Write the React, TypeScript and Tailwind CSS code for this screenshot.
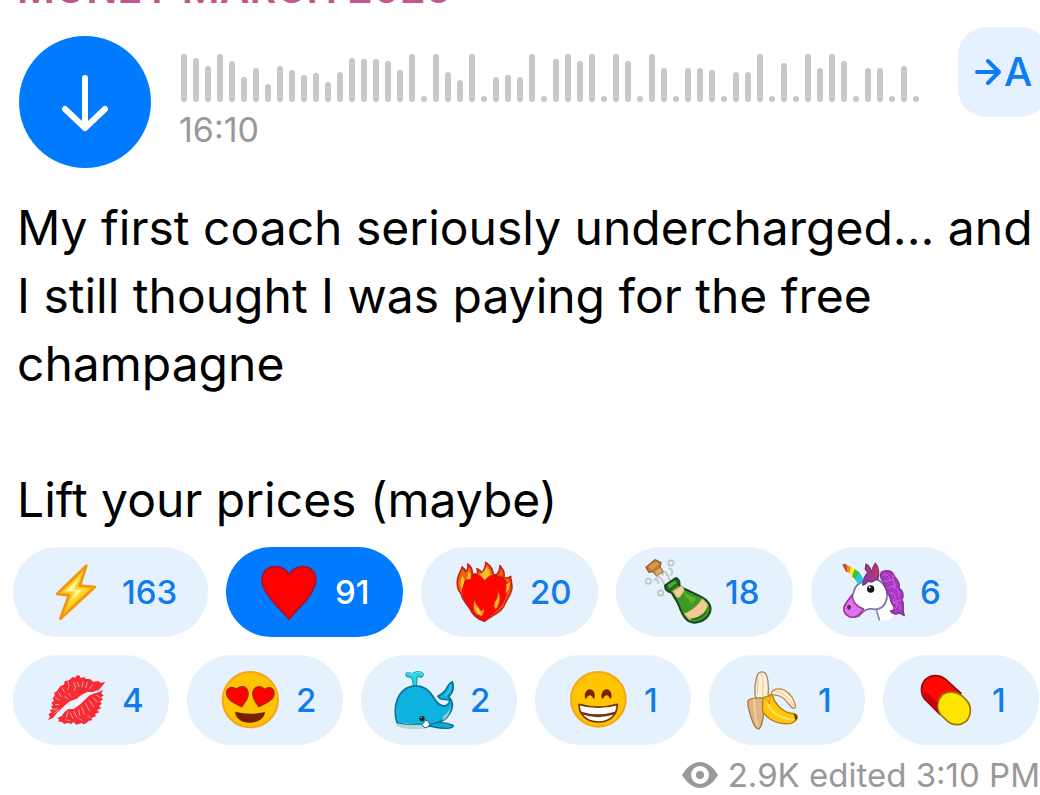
import React from "react";

type IconProps = { viewBox: string; children: React.ReactNode };

function Emoji({ viewBox, children }: IconProps) {
  return (
    <svg viewBox={viewBox} className="size-[68px] shrink-0" aria-hidden="true" strokeLinejoin="round" strokeLinecap="round">
      {children}
    </svg>
  );
}

const Bolt = () => (
  <Emoji viewBox="126 54 204 204">
    <path d="M259 77 L171 162 L207 166 L181 236 L285 141 L240 137 Z" fill="#ffc61a" stroke="#f0960f" strokeWidth="8" />
    <path d="M247 98 L190 155 L219 158 L200 207 L265 146 L228 143 Z" fill="#ffd932" />
    <path d="M238 112 L198 153 L226 155 L211 185 L246 151 L221 148 Z" fill="#fff59a" />
  </Emoji>
);

const Heart = () => (
  <Emoji viewBox="765 54 204 204">
    <path
      d="M867 238 C850 216 828 198 808 171 C791 149 784 134 786 115 C789 91 806 79 826 80 C847 81 861 91 867 105 C874 91 887 81 907 80 C929 79 945 93 947 114 C949 134 939 153 924 173 C905 198 884 216 867 238 Z"
      fill="#ff0000"
      stroke="#a5122c"
      strokeWidth="5"
    />
  </Emoji>
);

const BurningHeart = () => (
  <Emoji viewBox="99 54 204 204">
    <path
      d="M202 244 C181 237 165 221 159 206 C146 190 135 176 132 160 C119 149 119 123 124 110 C127 96 134 91 135 81 C140 85 144 90 146 95 C152 91 154 80 152 72 C161 78 167 92 166 107 C169 102 175 100 179 104 C184 105 182 93 180 86 C188 90 193 95 194 98 C203 91 207 76 206 67 C219 76 228 86 228 102 C237 110 249 98 249 77 C258 89 264 97 260 112 C267 117 276 113 281 109 C280 123 290 139 282 155 C278 168 269 180 264 190 C258 215 229 222 202 244 Z"
      fill="#f5600f"
      stroke="#c5201b"
      strokeWidth="5"
    />
    <path
      d="M202 242 C183 233 167 221 161 205 C146 186 136 172 137 145 C142 114 162 101 182 106 C193 109 199 116 202 125 C214 108 230 102 247 109 C268 117 273 137 269 158 C263 180 252 198 240 210 C228 220 214 228 202 242 Z"
      fill="#ff0500"
      stroke="#d9150f"
      strokeWidth="4"
    />
    <path d="M187 103 C196 100 207 89 208 78 C215 87 221 94 220 104 L203 119 Z" fill="#ffba25" />
    <path d="M146 118 C153 111 155 101 151 93 C163 99 164 108 160 118 Z M134 151 C128 132 130 117 137 107 L143 121 Z" fill="#ffbd26" />
    <path d="M176 169 C168 188 185 198 190 209 C195 216 199 207 198 199 C207 216 196 232 189 228 C171 223 160 205 176 169 Z" fill="#ff9c18" stroke="#d91c14" strokeWidth="3" />
    <path d="M178 202 C177 213 184 220 191 224 C185 213 188 207 178 202 Z" fill="#ffe343" />
    <path d="M241 151 C254 170 251 187 237 209 C231 205 228 195 234 184 C241 175 244 163 241 151 Z M266 132 C275 131 277 124 278 119 C284 137 278 153 267 161 C263 154 270 144 266 132 Z" fill="#ffb527" stroke="#df2b16" strokeWidth="3" />
  </Emoji>
);

const Champagne = () => (
  <Emoji viewBox="684 54 204 204">
    <g fill="#eef2f5" stroke="#c2c2c2" strokeWidth="5">
      <circle cx="694" cy="124" r="8" />
      <circle cx="731" cy="159" r="8" />
      <circle cx="762" cy="69" r="8" />
      <path d="M711 119 C719 115 725 123 723 129 M718 112 C728 105 737 122 743 133 M737 105 C739 91 750 95 749 105 C756 103 754 119 759 122 M756 85 C768 88 768 99 762 105" fill="none" />
    </g>
    <path d="M687 82 L714 59 L732 68 L729 82 L737 94 L719 106 L708 95 L696 97 Z" fill="#bf7b38" stroke="#98612c" strokeWidth="4" />
    <path d="M693 79 L717 65 L727 71 L705 91 Z" fill="#d69a50" />
    <path d="M711 94 L730 81 L739 96 L719 107 Z" fill="#dba963" stroke="#a97031" strokeWidth="3" />
    <path
      d="M744 137 L776 114 C784 115 789 125 787 137 C814 157 840 158 867 180 C883 195 885 211 873 228 C857 247 830 253 814 243 C793 229 792 206 781 187 L764 158 C752 155 744 148 744 137 Z"
      fill="#3f9824"
      stroke="#12491b"
      strokeWidth="6"
    />
    <path d="M748 136 L776 117 L784 133 L758 153 Z" fill="#28771f" stroke="#194b1b" strokeWidth="3" />
    <path d="M751 136 L775 121 L778 130 L757 145 Z" fill="#59a628" />
    <path d="M768 154 L793 137 C804 144 803 157 793 163 C792 171 783 176 779 171 Z" fill="#f0cf98" stroke="#cba868" strokeWidth="2" />
    <path d="M802 221 C820 215 842 198 856 176 L872 193 C870 218 845 239 818 239 Z" fill="#f0cb91" stroke="#cfaf6c" strokeWidth="2" />
    <path d="M798 157 L836 174 C835 183 829 190 823 191 Z" fill="#5fb32c" />
    <path d="M872 201 C872 221 853 239 826 241 L819 236 C844 235 865 220 872 201 Z" fill="#23731d" />
  </Emoji>
);

const Unicorn = () => (
  <Emoji viewBox="120 54 204 204">
    <path d="M229 203 L239 241 C264 245 289 236 282 209 L280 142 L250 124 L224 164 Z" fill="#ffffff" />
    <path d="M176 132 C188 124 204 118 218 116 C247 117 267 149 260 175 C257 197 239 212 218 207 C199 203 186 218 176 229 C157 236 132 224 132 204 C134 190 151 178 159 163 C163 151 164 139 176 132 Z" fill="#ffffff" stroke="#7b68a5" strokeWidth="5" />
    <path d="M156 165 C158 185 171 201 191 207 C182 218 178 228 164 231 C146 235 130 221 132 204 C134 189 148 178 156 165 Z" fill="#df72ed" stroke="#9c378e" strokeWidth="5" />
    <ellipse cx="147" cy="202" rx="6" ry="8" fill="#741b72" />
    <path d="M130 74 L138 74 L148 91 L140 95 L132 81 Z" fill="#d84b25" stroke="#a94228" strokeWidth="3" />
    <path d="M140 76 L155 81 L151 101 L141 93 Z" fill="#ff841a" />
    <path d="M151 80 L166 87 L161 110 L149 100 Z" fill="#ffed23" />
    <path d="M164 88 L179 97 L168 121 L156 109 Z" fill="#41bf38" />
    <path d="M178 97 L187 111 C192 121 186 132 174 133 L167 120 Z" fill="#24c7e0" />
    <path d="M188 135 C190 119 194 105 205 98 L196 88 L198 72 C207 77 214 90 217 101 C216 91 219 80 226 70 C236 80 239 102 233 119 C220 118 218 130 210 125 C201 119 204 132 188 135 Z" fill="#9a38a0" stroke="#713679" strokeWidth="4" />
    <path d="M219 82 L227 72 C237 86 236 107 228 114 L219 111 Z M199 76 L211 93 L203 99 Z" fill="#c53166" stroke="#984070" strokeWidth="3" />
    <path d="M244 96 C269 86 279 95 285 112 C297 122 300 136 297 144 C309 151 313 167 306 180 C316 194 304 207 313 227 L297 218 C289 226 276 221 271 213 C283 213 285 203 279 196 C267 180 275 169 260 157 C264 143 249 143 251 126 C240 116 240 105 244 96 Z" fill="#a837c4" stroke="#843191" strokeWidth="4" />
    <path d="M249 105 C263 101 269 109 270 120 C283 120 286 132 281 141 C294 145 299 155 296 168 M252 124 L270 121 M264 145 L282 137 M269 160 C282 155 290 169 282 177 L280 190 C296 182 303 196 300 210 M280 104 C275 127 292 130 282 146 M304 179 L285 185 M285 207 C291 203 292 195 290 188" fill="none" stroke="#cf66de" strokeWidth="3" />
    <circle cx="212" cy="147" r="11" fill="#151515" />
    <circle cx="209" cy="142" r="3" fill="#ffffff" />
    <path d="M230 212 L238 239 M260 177 C256 192 246 206 230 208" fill="none" stroke="#7f85ad" strokeWidth="5" />
  </Emoji>
);

const Kiss = () => (
  <Emoji viewBox="126 48 204 204">
    <path d="M316 96 L304 111 L296 120 L278 126 L263 126 L251 131 L240 138 L229 147 L211 153 L198 163 L184 176 L171 188 L159 204 L143 210 L150 200 L145 193 L155 187 L149 180 L158 177 L153 169 L160 166 L154 158 L162 153 L158 144 L164 138 L163 128 L170 124 L176 116 L181 108 L192 104 L194 94 L207 91 L218 81 L226 83 L231 75 L239 77 L242 84 L252 81 L258 87 L270 87 L280 95 L294 93 L302 98 Z" fill="#f72b31" />
    <path d="M310 120 L295 127 L278 132 L267 137 L255 149 L241 163 L221 177 L205 177 L193 187 L185 198 L171 205 L179 209 L173 214 L187 216 L192 222 L205 218 L213 223 L220 216 L229 224 L237 222 L244 219 L251 223 L260 219 L266 212 L277 211 L274 204 L288 199 L285 192 L298 187 L291 180 L304 175 L297 168 L306 161 L300 155 L309 148 L303 142 L311 136 L304 130 Z" fill="#f72b31" />
    <g fill="none" stroke="#e5dbe5" strokeWidth="2">
      <path d="M204 96 L207 109 L203 119 M222 97 L226 111 L223 122 M232 96 L237 110 M249 95 L246 111 M262 97 L257 113 M279 103 L268 116 M187 114 L193 126 M176 128 L184 140 M166 143 L178 150 M166 163 L176 164 M158 180 L170 176 M162 190 L176 179 M206 130 L213 141 M194 139 L203 147" />
      <path d="M205 185 L199 201 M211 189 L219 205 M222 185 L231 202 M236 179 L239 195 M245 171 L253 193 M256 160 L268 181 M267 151 L281 170 M278 143 L292 155 M289 135 L301 143 M196 209 L211 213 M239 207 L247 213 M264 196 L271 204" />
    </g>
    <path d="M207 171 L197 173 M220 160 L212 168 M242 151 L228 163 M249 142 L239 154" stroke="#ffffff" strokeWidth="4" />
  </Emoji>
);

const LoveFace = () => (
  <Emoji viewBox="648 48 204 204">
    <circle cx="751" cy="149" r="83" fill="#ffc400" stroke="#f7a51a" strokeWidth="6" />
    <g fill="#ff0000" stroke="#a72a10" strokeWidth="4">
      <path d="M725 170 C710 162 687 156 681 137 C675 114 693 107 710 117 C721 105 740 108 744 126 C748 145 734 158 725 170 Z" />
      <path d="M776 170 C769 158 755 145 759 126 C763 109 782 105 794 118 C811 107 827 117 821 138 C815 155 792 161 776 170 Z" />
    </g>
    <path d="M705 185 Q749 197 795 186 C794 206 773 218 750 218 C727 219 708 207 705 185 Z" fill="#732006" />
  </Emoji>
);

const Whale = () => (
  <Emoji viewBox="120 48 204 204">
    <path d="M191 110 L187 86 C178 76 172 84 168 76 C165 67 179 65 187 72 C195 63 211 62 219 71 C222 76 214 85 207 79 C199 78 201 91 199 111 Z" fill="#22d7e6" stroke="#219eb2" strokeWidth="4" />
    <path d="M170 72 C179 64 184 74 193 73 C200 64 211 65 218 73" fill="none" stroke="#7ff6f5" strokeWidth="3" />
    <path d="M139 211 C129 167 142 120 184 109 C219 102 238 119 252 144 C264 167 289 178 299 155 L298 150 C286 146 272 153 264 139 C276 132 283 127 287 120 C293 107 301 99 307 95 C313 112 309 131 295 139 C317 161 305 184 292 200 C284 210 274 215 260 218 C232 238 184 235 144 221 Z" fill="#0eb2df" stroke="#077698" strokeWidth="5" />
    <path d="M139 218 C163 226 190 226 217 224 L227 209 L242 232 C211 241 165 239 139 228 Z" fill="#bdd4da" />
    <path d="M139 218 C162 225 190 222 218 222 C223 217 223 211 233 211 L241 226 L225 234 L214 223" fill="#ffffff" stroke="#076f93" strokeWidth="3" />
    <path d="M237 228 C255 212 290 218 310 226 C311 238 275 237 253 231 Z" fill="#12add7" stroke="#076e91" strokeWidth="4" />
    <path d="M279 199 C289 193 300 180 303 170 C300 186 297 199 279 211 Z" fill="#a8c6d0" />
    <path d="M301 105 C302 116 298 126 286 137" fill="none" stroke="#65d8ec" strokeWidth="3" />
    <circle cx="216" cy="206" r="8" fill="#10222e" />
    <circle cx="214" cy="202" r="2" fill="#ffffff" />
  </Emoji>
);

const Grin = () => (
  <Emoji viewBox="642 48 204 204">
    <circle cx="745" cy="148" r="82" fill="#ffc400" stroke="#f7a51a" strokeWidth="6" />
    <path d="M706 146 C701 134 708 118 719 118 C731 118 738 133 733 146 C729 148 728 137 720 136 C712 136 711 147 706 146 Z M756 146 C751 134 758 118 769 118 C781 118 788 133 783 146 C779 148 778 137 770 136 C762 136 761 147 756 146 Z" fill="#70240b" />
    <path d="M687 163 Q745 180 802 163 C802 198 776 216 745 216 C711 216 687 195 687 163 Z" fill="#ffffff" stroke="#78310b" strokeWidth="5" />
    <path d="M688 184 Q744 202 801 184 L796 192 Q744 211 693 192 Z" fill="#78310b" />
  </Emoji>
);

const Banana = () => (
  <Emoji viewBox="114 48 204 204">
    <path d="M168 144 L165 135 C164 113 168 86 173 73 C179 63 193 63 199 75 C207 93 206 116 204 142 L188 151 Z" fill="#fff0d7" stroke="#a98557" strokeWidth="4" />
    <path d="M181 70 C190 72 191 113 188 137 M174 81 L172 129" fill="none" stroke="#ddc3a0" strokeWidth="3" />
    <path d="M215 127 C219 117 236 113 252 120 C273 130 285 153 287 171 C279 181 271 168 262 157 C250 141 235 133 215 135 Z" fill="#fff0d1" stroke="#b18a51" strokeWidth="4" />
    <path d="M224 124 C246 126 265 141 281 168" fill="none" stroke="#dfc193" strokeWidth="3" />
    <path d="M145 151 C153 143 172 143 190 144 C192 177 190 221 178 236 C167 239 158 219 152 198 C147 180 140 164 145 151 Z" fill="#dfb582" stroke="#a6794a" strokeWidth="4" />
    <path d="M163 148 C162 177 168 210 174 230" fill="none" stroke="#f3cfa2" strokeWidth="5" />
    <path d="M188 143 C198 137 202 145 209 135 L216 133 C222 157 243 184 270 189 C281 190 290 192 292 199 C292 209 286 216 273 220 C237 226 205 211 188 184 Z" fill="#ffc60b" stroke="#bb7e13" strokeWidth="4" />
    <path d="M204 161 C210 184 237 206 277 208" fill="none" stroke="#ffe354" strokeWidth="7" />
    <path d="M189 145 C199 144 206 151 207 162 L211 138" fill="none" stroke="#da9610" strokeWidth="3" />
    <path d="M281 191 C290 192 294 201 289 210 C283 207 285 197 281 191 Z" fill="#452f2a" />
  </Emoji>
);

const Capsule = () => (
  <Emoji viewBox="636 48 204 204">
    <path d="M676 89 C692 73 719 73 737 88 L783 130 L720 193 L673 146 C660 128 662 105 676 89 Z" fill="#ff0900" stroke="#960b12" strokeWidth="5" />
    <path d="M728 134 C746 122 769 124 788 139 L802 154 C814 168 814 192 803 209 C788 226 762 230 743 214 L723 195 C706 175 712 151 728 134 Z" fill="#ffe600" stroke="#977b09" strokeWidth="5" />
    <path d="M672 142 L716 187 C711 176 711 168 714 158 L675 122 C670 128 670 136 672 142 Z" fill="#cf0007" />
  </Emoji>
);

const reactions = [
  { name: "Lightning", count: 163, Icon: Bolt, mine: false },
  { name: "Heart", count: 91, Icon: Heart, mine: true },
  { name: "Heart on fire", count: 20, Icon: BurningHeart, mine: false },
  { name: "Champagne", count: 18, Icon: Champagne, mine: false },
  { name: "Unicorn", count: 6, Icon: Unicorn, mine: false },
  { name: "Kiss mark", count: 4, Icon: Kiss, mine: false },
  { name: "Heart eyes", count: 2, Icon: LoveFace, mine: false },
  { name: "Whale", count: 2, Icon: Whale, mine: false },
  { name: "Grin", count: 1, Icon: Grin, mine: false },
  { name: "Banana", count: 1, Icon: Banana, mine: false },
  { name: "Pill", count: 1, Icon: Capsule, mine: false },
];

// Pills with the same number of digits share one width.
const pillWidth = (count: number) => (count > 99 ? "w-[195px]" : count > 9 ? "w-[177px]" : "w-[156px]");

const levels = [
  48, 44, 36, 48, 41, 25, 34, 18, 36, 32, 27, 29, 20, 30, 44, 43, 43, 41, 32, 48, 6, 48, 30, 22, 48, 6, 25, 27, 25, 48, 6,
  43, 48, 41, 48, 6, 48, 41, 6, 48, 34, 6, 34, 34, 32, 6, 30, 30, 48, 6, 39, 6, 48, 34, 48, 41, 6, 34, 34, 6, 36, 6,
];

function Waveform() {
  return (
    <svg viewBox="0 0 738 48" className="h-12 w-[738px] fill-[#c8c8c8]" aria-hidden="true">
      {levels.map((h, i) => (
        <rect key={i} x={i * 12} y={48 - h} width="6" height={h} rx="3" />
      ))}
    </svg>
  );
}

export default function App() {
  return (
    <main className="overflow-hidden bg-white font-['Inter',sans-serif] text-black">
      <h1 className="-mt-[42px] pl-[17px] text-[41px] leading-[60px] font-semibold whitespace-nowrap text-[#c4568e]">
        MONEY MARCH 2025
      </h1>

      <section className="mt-[9px] -mr-2 flex items-start pl-[19px]">
        <button
          type="button"
          aria-label="Download voice message"
          className="mt-[9px] flex size-[132px] shrink-0 items-center justify-center rounded-full bg-[#007aff]"
        >
          <svg viewBox="0 0 48 60" className="h-[60px] w-12" fill="none" stroke="#fff" strokeWidth="6" strokeLinecap="round" strokeLinejoin="round" aria-hidden="true">
            <path d="M24 6 V56 M4 37 L24 56 L44 37" />
          </svg>
        </button>
        <div className="mt-[27px] ml-[28px] flex-1">
          <div className="pl-[2px]">
            <Waveform />
          </div>
          <p className="mt-[8px] text-[34px] leading-[40px] text-[#999999]">16:10</p>
        </div>
        <button
          type="button"
          aria-label="Transcribe to text"
          className="flex size-[90px] shrink-0 items-center gap-0.5 rounded-[28px] bg-[#e5f1fe] pl-4 text-[#0a7cf5]"
        >
          <svg viewBox="0 0 28 28" className="size-7 shrink-0" fill="none" stroke="currentColor" strokeWidth="4" strokeLinecap="round" strokeLinejoin="round" aria-hidden="true">
            <path d="M3 14 H25 M14 3 L25 14 L14 25" />
          </svg>
          <span className="text-[40px] leading-none font-medium">A</span>
        </button>
      </section>

      <div className="mt-[26px] pl-[17px] text-[48px] leading-[68px] whitespace-nowrap">
        <p>
          My first coach seriously undercharged... and
          <br />
          I still thought I was paying for the free
          <br />
          champagne
        </p>
        <p className="mt-[68px]">Lift your prices (maybe)</p>
      </div>

      <section className="mt-[13px] flex flex-wrap gap-[18px] pl-[13px]" aria-label="Reactions">
        {reactions.map(({ name, count, Icon, mine }) => (
          <button
            key={name}
            type="button"
            aria-label={`${name} ${count}`}
            aria-pressed={mine}
            className={`flex h-[90px] items-center gap-3 rounded-full pl-[29px] text-[33px] font-medium ${
              mine ? "bg-[#007aff] text-white" : "bg-[#e5f1fd] text-[#0f7bec]"
            } ${pillWidth(count)}`}
          >
            <Icon />
            <span className="pt-0.5">{count}</span>
          </button>
        ))}
      </section>

      <footer className="mt-[10px] flex items-center justify-end gap-[10px] text-[33px] leading-[40px] whitespace-nowrap text-[#999999]">
        <svg viewBox="0 0 36 26" className="h-[26px] w-9 shrink-0" aria-hidden="true">
          <path d="M0 13 C5 5 11 0 18 0 C25 0 31 5 36 13 C31 21 25 26 18 26 C11 26 5 21 0 13 Z" fill="currentColor" />
          <circle cx="18" cy="13" r="9" fill="#fff" />
          <circle cx="18" cy="13" r="4" fill="currentColor" />
        </svg>
        <span>2.9K edited 3:10 PM</span>
      </footer>
    </main>
  );
}
